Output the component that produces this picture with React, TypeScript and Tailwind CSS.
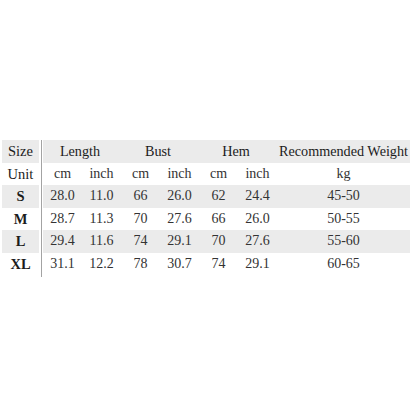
import React from 'react';

const rows = [
  { size: 'S', vals: ['28.0', '11.0', '66', '26.0', '62', '24.4'], kg: '45-50', shade: true },
  { size: 'M', vals: ['28.7', '11.3', '70', '27.6', '66', '26.0'], kg: '50-55', shade: false },
  { size: 'L', vals: ['29.4', '11.6', '74', '29.1', '70', '27.6'], kg: '55-60', shade: true },
  { size: 'XL', vals: ['31.1', '12.2', '78', '30.7', '74', '29.1'], kg: '60-65', shade: false },
];

const units = ['cm', 'inch', 'cm', 'inch', 'cm', 'inch'];

export default function App() {
  return (
    <div
      className="w-[416px] h-[416px] bg-white text-[14px] leading-none text-[#2a2a2a]"
      style={{ fontFamily: '"Liberation Serif", "DejaVu Serif", serif' }}
    >
      <div className="flex pt-[140px] pl-[2px]">
        {/* size column */}
        <div className="flex w-[37px] flex-col text-[14.5px] text-[#1c1c1c]">
          <div className="flex h-[22.5px] items-center justify-center bg-[#ebebeb]">Size</div>
          <div className="flex h-[22.5px] items-center justify-center">Unit</div>
          {rows.map((r) => (
            <div
              key={r.size}
              className={`flex h-[22.5px] items-center justify-center font-bold ${r.shade ? 'bg-[#ebebeb]' : ''}`}
            >
              {r.size}
            </div>
          ))}
        </div>

        {/* divider */}
        <div className="flex w-[4px] justify-center">
          <div className="h-[137px] w-px bg-[#a3a3a3]" />
        </div>

        {/* data */}
        <div className="flex w-[367px] flex-col">
          <div className="grid h-[22.5px] grid-cols-[78px_78px_78px_133px] items-center whitespace-nowrap bg-[#ebebeb] text-[14.2px] text-[#1c1c1c]">
            <div className="pr-[4px] text-center">Length</div>
            <div className="pr-[4px] text-center">Bust</div>
            <div className="pr-[4px] text-center">Hem</div>
            <div className="text-center">Recommended Weight</div>
          </div>
          <div className="grid h-[22.5px] grid-cols-[39px_39px_39px_39px_39px_39px_133px] items-center text-[#333]">
            {units.map((u, i) => (
              <div key={i} className="text-center">{u}</div>
            ))}
            <div className="text-center">kg</div>
          </div>
          {rows.map((r) => (
            <div
              key={r.size}
              className={`grid h-[22.5px] grid-cols-[39px_39px_39px_39px_39px_39px_133px] items-center text-[#333] ${r.shade ? 'bg-[#ebebeb]' : ''}`}
            >
              {r.vals.map((v, i) => (
                <div key={i} className="text-center">{v}</div>
              ))}
              <div className="text-center">{r.kg}</div>
            </div>
          ))}
        </div>
      </div>
    </div>
  );
}
